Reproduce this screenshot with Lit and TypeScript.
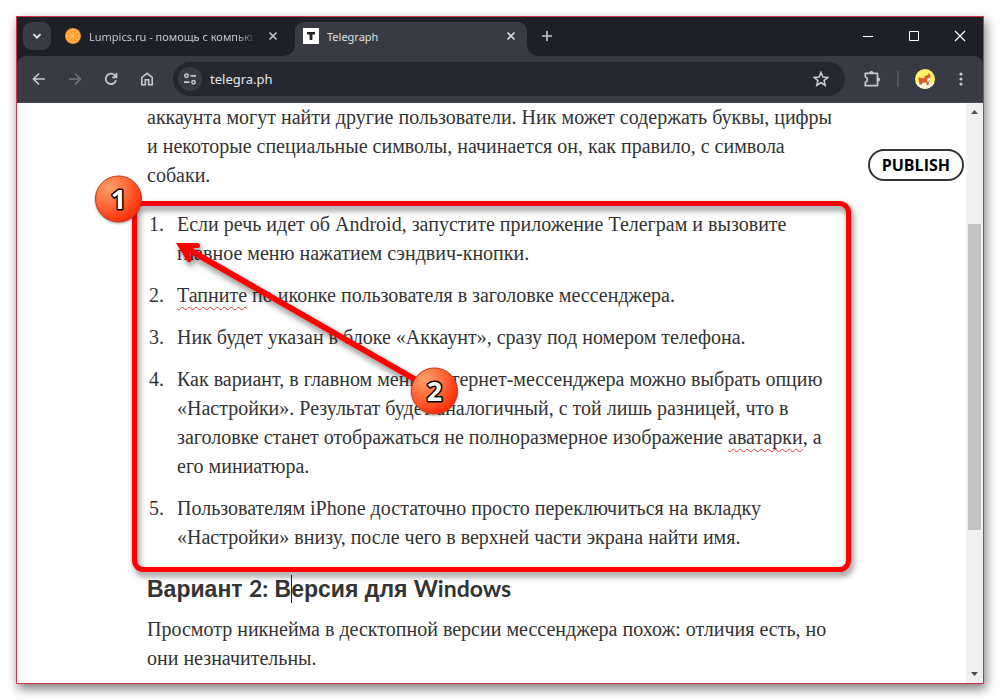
import { LitElement, html, svg, css } from "lit";
import { customElement, property } from "lit/decorators.js";

const icons = {
  chevron: svg`<path d="M4.5 6.2 8 9.7l3.5-3.5" stroke-width="1.8"/>`,
  close: svg`<path d="M4.5 4.5l7 7M11.5 4.5l-7 7" stroke-width="1.6"/>`,
  plus: svg`<path d="M8 3v10M3 8h10" stroke-width="1.6"/>`,
  min: svg`<path d="M3 8.5h10" stroke-width="1"/>`,
  max: svg`<path d="M3.5 3.5h9v9h-9z" stroke-width="1"/>`,
  exit: svg`<path d="M3 3l10 10M13 3L3 13" stroke-width="1.2"/>`,
  back: svg`<path d="M14 8H2.8M8 2.5L2.5 8 8 13.5" stroke-width="1.7"/>`,
  forward: svg`<path d="M2 8h11.2M8 2.5L13.5 8 8 13.5" stroke-width="1.7"/>`,
  reload: svg`<path d="M13 9.2A5.2 5.2 0 1 1 11.8 4.4L13.2 6M13.5 2v4.3H9.2" stroke-width="1.7"/>`,
  home: svg`<path d="M2.8 6.500 8 2.300l5.200 4.200v7.200h-3.500V8.800H6.300v4.900H2.800z" stroke-width="1.6"/>`,
  tune: svg`<circle cx="4.5" cy="4.8" r="1.7" stroke-width="1.5"/><path d="M8.500 4.800h5.500M2 11.200h5.500" stroke-width="1.8"/><circle cx="11.5" cy="11.2" r="1.7" stroke-width="1.5"/>`,
  star: svg`<path d="M8 1.500l1.900 4.500 4.900.4-3.700 3.200 1.100 4.700L8 11.800 3.800 14.300l1.100-4.700L1.200 6.400l4.900-.4z" stroke-width="1.6"/>`,
};

@customElement("ui-icon")
export class UiIcon extends LitElement {
  @property() name: keyof typeof icons = "close";
  static styles = css`
    :host { display: block; width: 16px; height: 16px; }
    .glyph { display: block; width: 100%; height: 100%; fill: none; stroke: currentColor; }
  `;
  render() {
    return html`<svg class="glyph" viewBox="0 0 16 16" aria-hidden="true">${icons[this.name]}</svg>`;
  }
}

@customElement("browser-tabs")
export class BrowserTabs extends LitElement {
  static styles = css`
    :host { display: flex; height: 39px; box-sizing: border-box; padding: 5px 0 0 6px; background: #1d2127; color: #c4c7cc; font: 11px/18px "Noto Sans", "Open Sans", sans-serif; }
    button { appearance: none; border: 0; padding: 0; margin: 0; background: none; color: inherit; display: flex; align-items: center; justify-content: center; }
    .search { width: 28px; height: 28px; border-radius: 9px; background: #393b44; color: #e8e8ea; }
    .tab { display: flex; align-items: center; gap: 8px; height: 28px; box-sizing: border-box; }
    .idle { width: 230px; margin-left: 14px; }
    .active { position: relative; width: 232px; height: 34px; padding: 0 8px 6px; background: #393b44; color: #dfe0e3; border-radius: 9px 9px 0 0; }
    .active::before, .active::after { content: ""; position: absolute; bottom: 0; width: 10px; height: 10px; }
    .active::before { left: -10px; background: radial-gradient(circle at 0 0, transparent 9px, #393b44 10px); }
    .active::after { right: -10px; background: radial-gradient(circle at 100% 0, transparent 9px, #393b44 10px); }
    .fav { width: 16px; height: 16px; flex: none; }
    .title { width: 168px; flex: none; padding-top: 2px; overflow: hidden; white-space: nowrap; }
    .fade { mask-image: linear-gradient(90deg, #000 88%, transparent); }
    .close { width: 16px; height: 16px; }
    .add { width: 28px; height: 28px; margin-left: 6px; }
    .controls { display: flex; margin: -5px 0 0 auto; color: #fff; }
    .controls button { width: 46px; height: 38px; }
  `;
  render() {
    return html`
      <button class="search" aria-label="Поиск вкладок"><ui-icon name="chevron"></ui-icon></button>
      <div class="tab idle">
        <svg class="fav" viewBox="0 0 16 16"><circle cx="8" cy="8" r="8" fill="#f58a12"/><circle cx="8" cy="8" r="6.8" fill="#ffd08a"/><circle cx="8" cy="8" r="6.1" fill="#ff9d1c"/><path d="M8 2v12M2 8h12M3.800 3.800l8.400 8.400M12.200 3.800l-8.400 8.400" stroke="#ffc877" stroke-width=".8"/></svg>
        <span class="title fade">Lumpics.ru - помощь с компью</span>
        <button class="close" aria-label="Закрыть вкладку"><ui-icon name="close"></ui-icon></button>
      </div>
      <div class="tab active">
        <svg class="fav" viewBox="0 0 16 16"><path fill="#fff" d="M0 0h16v16H0z"/><path fill="#222" d="M4 4h8v2.500H9.400V12H6.600V6.500H4z"/></svg>
        <span class="title">Telegraph</span>
        <button class="close" aria-label="Закрыть вкладку"><ui-icon name="close"></ui-icon></button>
      </div>
      <button class="add" aria-label="Новая вкладка"><ui-icon name="plus"></ui-icon></button>
      <div class="controls">
        <button aria-label="Свернуть"><ui-icon name="min"></ui-icon></button>
        <button aria-label="Развернуть"><ui-icon name="max"></ui-icon></button>
        <button aria-label="Закрыть"><ui-icon name="exit"></ui-icon></button>
      </div>`;
  }
}

@customElement("browser-toolbar")
export class BrowserToolbar extends LitElement {
  static styles = css`
    :host { display: block; background: #1d2127; }
    .bar { display: flex; align-items: center; height: 47px; box-sizing: border-box; padding: 0 4px; background: #393b44; border-radius: 9px 9px 0 0; border-bottom: 1px solid #474a52; color: #c8cacf; }
    button { appearance: none; border: 0; padding: 0; margin: 0; background: none; color: inherit; display: flex; align-items: center; justify-content: center; width: 36px; height: 34px; flex: none; }
    .off { color: #71747b; }
    .address { flex: 1; min-width: 0; display: flex; align-items: center; gap: 8px; height: 34px; margin: 0 9px 0 8px; padding: 0 6px 0 5px; box-sizing: border-box; border-radius: 17px; background: #24272e; }
    .site { width: 24px; height: 24px; border-radius: 12px; background: #393b44; }
    .url { flex: 1; min-width: 0; border: 0; padding: 0; outline: 0; background: none; color: #e6e7ea; font: 13px/18px "Noto Sans", "Open Sans", sans-serif; }
    .ext { width: 18px; height: 18px; }
    .rule { width: 2px; height: 16px; margin: 0 8px 0 7px; background: #50535b; }
    .face { width: 20px; height: 20px; }
    .dots { width: 16px; height: 16px; fill: currentColor; }
  `;
  render() {
    return html`<div class="bar">
      <button aria-label="Назад"><ui-icon name="back"></ui-icon></button>
      <button class="off" aria-label="Вперёд"><ui-icon name="forward"></ui-icon></button>
      <button aria-label="Обновить"><ui-icon name="reload"></ui-icon></button>
      <button aria-label="Домой"><ui-icon name="home"></ui-icon></button>
      <div class="address">
        <button class="site" aria-label="Сведения о сайте"><ui-icon name="tune"></ui-icon></button>
        <input class="url" aria-label="Адрес" value="telegra.ph">
        <button aria-label="В закладки"><ui-icon name="star"></ui-icon></button>
      </div>
      <button aria-label="Расширения"><svg class="ext" viewBox="0 0 18 18"><path d="M2.300 3.300H14.500V15.700H2.300V12.300C5 11.500 5 7.500 2.300 6.700z" fill="none" stroke="currentColor" stroke-width="1.7" stroke-linejoin="round"/><path d="M6.300 3a2.100 2.100 0 0 1 4.200 0zM15 7.400a2.100 2.100 0 0 1 0 4.200z" fill="currentColor"/></svg></button>
      <span class="rule"></span>
      <button aria-label="Профиль"><svg class="face" viewBox="0 0 20 20"><clipPath id="c"><circle cx="10" cy="10" r="10"/></clipPath><g clip-path="url(#c)"><path fill="#fff26b" d="M0 0h20v20H0z"/><path fill="#fff6e2" d="M0 13.500h20V20H0z"/><path fill="#dc5b26" d="M3.500 9l1.500-.8 1 1h3.500L9.500 7 12 6.500 14 4l1.200 2.500L15.500 10l-1.500 3.500-.5 2.500H11.500v-2.500H7.500L7 15.500H4.500L4 12z"/><path fill="#fff6e2" d="M12.300 9.500l2.700-1 .2 2-1.700 2.500-1.500-.5z"/></g></svg></button>
      <button aria-label="Меню"><svg class="dots" viewBox="0 0 16 16"><circle cx="8" cy="3" r="1.6"/><circle cx="8" cy="8" r="1.6"/><circle cx="8" cy="13" r="1.6"/></svg></button>
    </div>`;
  }
}

@customElement("article-page")
export class ArticlePage extends LitElement {
  static styles = css`
    :host { display: flex; min-height: 0; overflow: hidden; background: #fff; color: #333; }
    .body { flex: 1; min-width: 0; display: flex; align-items: flex-start; justify-content: space-between; padding: 0 2px 0 130px; }
    .text { font: 20px/29px "Liberation Serif", serif; white-space: nowrap; }
    p { margin: 0; }
    ol { display: grid; gap: 13px; margin: 20px 0; padding-left: 22px; }
    li { padding-left: 8px; }
    h3 { margin: 0 0 10px; font: bold 23px/32px "Liberation Sans", sans-serif; }
    .latin { font-family: Lato, sans-serif; }
    .caret { display: inline-block; width: 1px; height: 28px; margin-right: -1px; background: #222; vertical-align: -6px; }
    .wavy { text-decoration: underline wavy #e33a3a 1px; text-underline-offset: 4px; text-decoration-skip-ink: none; }
    .publish { appearance: none; margin: 46px 0 0; height: 32px; padding: 0 12px; border: 2px solid #333; border-radius: 16px; background: #fff; color: #000; font: bold 16px/28px "Open Sans", sans-serif; }
    .scroll { width: 17px; flex: none; display: flex; flex-direction: column; align-items: center; background: #f0f0f0; box-sizing: border-box; }
    .arrow { width: 17px; height: 17px; fill: #505050; }
    .thumb { width: 13px; height: 306px; margin: 104px 0 auto; background: #c1c1c1; }
  `;
  render() {
    return html`
      <div class="body">
        <article class="text">
          <p>аккаунта могут найти другие пользователи. Ник может содержать буквы, цифры<br>и некоторые специальные символы, начинается он, как правило, с символа<br>собаки.</p>
          <ol>
            <li>Если речь идет об Android, запустите приложение Телеграм и вызовите<br>главное меню нажатием сэндвич-кнопки.</li>
            <li><span class="wavy">Тапните</span> по иконке пользователя в заголовке мессенджера.</li>
            <li>Ник будет указан в блоке «Аккаунт», сразу под номером телефона.</li>
            <li>Как вариант, в главном меню интернет-мессенджера можно выбрать опцию<br>«Настройки». Результат будет аналогичный, с той лишь разницей, что в<br>заголовке станет отображаться не полноразмерное изображение <span class="wavy">аватарки</span>, а<br>его миниатюра.</li>
            <li>Пользователям iPhone достаточно просто переключиться на вкладку<br>«Настройки» внизу, после чего в верхней части экрана найти имя.</li>
          </ol>
          <h3>Вариант <span class="latin">2:</span> В<span class="caret"></span>ерсия для <span class="latin">Windows</span></h3>
          <p>Просмотр никнейма в десктопной версии мессенджера похож: отличия есть, но<br>они незначительны.</p>
        </article>
        <button class="publish">PUBLISH</button>
      </div>
      <div class="scroll">
        <svg class="arrow" viewBox="0 0 17 17"><path d="M5 11l3.500-4 3.500 4z"/></svg>
        <div class="thumb"></div>
        <svg class="arrow" viewBox="0 0 17 17"><path d="M5 6l3.500 4L12 6z"/></svg>
      </div>`;
  }
}

@customElement("app-root")
export class AppRoot extends LitElement {
  static styles = css`
    :host { display: block; position: relative; height: 100vh; box-sizing: border-box; padding: 16px; background: #fff; }
    .window { display: grid; grid-template-rows: auto auto 1fr; height: 100%; box-sizing: border-box; border: 1px solid #d0344a; box-shadow: 2px 5px 10px rgba(0, 0, 0, .5); }
    .marks { position: absolute; left: 0; top: 0; width: 1000px; height: 700px; pointer-events: none; }
    .num { font: bold 27px "Open Sans", sans-serif; fill: #fff; stroke: #000; stroke-width: 3px; paint-order: stroke; stroke-linejoin: round; text-anchor: middle; }
    .frame { fill: none; stroke: #fe0000; stroke-width: 5px; }
    .pointer { fill: #fe0000; }
  `;
  badge(x: number, y: number, n: number) {
    return svg`<circle cx=${x} cy=${y} r="23" fill="url(#ball)" stroke="#c43a1c" filter="url(#soft)"/><text class="num" x=${x} y=${y + 10}>${n}</text>`;
  }
  render() {
    return html`
      <div class="window">
        <browser-tabs></browser-tabs>
        <browser-toolbar></browser-toolbar>
        <article-page></article-page>
      </div>
      <svg class="marks" viewBox="0 0 1000 700">
        <defs>
          <radialGradient id="ball" cx=".3" cy=".25" r=".8"><stop offset="0" stop-color="#ff9f68"/><stop offset=".5" stop-color="#ff6a3a"/><stop offset="1" stop-color="#f92c05"/></radialGradient>
          <filter id="shade" x="-10%" y="-10%" width="120%" height="120%"><feDropShadow dx="2" dy="4" stdDeviation="3" flood-opacity=".5"/></filter>
          <filter id="soft" x="-20%" y="-20%" width="140%" height="140%"><feDropShadow dx="0" dy="1" stdDeviation="1" flood-opacity=".4"/></filter>
        </defs>
        <g filter="url(#shade)">
          <rect class="frame" x="134.5" y="203.5" width="714" height="366" rx="9"/>
          <path class="pointer" d="M176 243h21.500a2.500 2.500 0 0 1 0 5l-5 .3L436 388l-3 5L189.500 253.500l1.800 4.500a2.500 2.500 0 0 1-4.300 3z"/>
        </g>
        ${this.badge(118.5, 199, 1)}
        ${this.badge(434.5, 391, 2)}
      </svg>`;
  }
}
